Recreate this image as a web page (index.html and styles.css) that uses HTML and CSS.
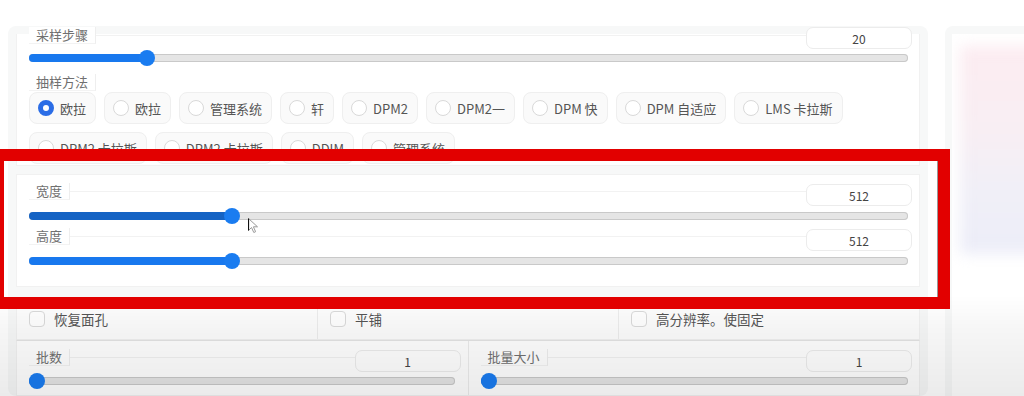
FILE: index.html
```html
<!DOCTYPE HTML>
<html>

<head>
    <title>生成设置</title>
    <meta name="viewport" content="width=device-width, initial-scale=1">
    <link rel="icon" href="data:,">
    <link rel="stylesheet" href="styles.css">
</head>

<body>
    <div class="page">
        <div class="settings">
            <div class="block block-sampler">
                <div class="group group-first">
                    <div class="group-head"><span class="label">采样步骤</span><span class="num">20</span></div>
                    <div class="slider"><div class="track"><div class="fill" style="width: calc(8px + (100% - 16px) * 0.1275)"></div></div></div>
                </div>
                <div class="radio-group">
                    <span class="label">抽样方法</span>
                    <div class="chips">
                        <label class="chip"><span class="radio checked"></span>欧拉</label>
                        <label class="chip"><span class="radio"></span>欧拉</label>
                        <label class="chip"><span class="radio"></span>管理系统</label>
                        <label class="chip"><span class="radio"></span>轩</label>
                        <label class="chip"><span class="radio"></span>DPM2</label>
                        <label class="chip"><span class="radio"></span>DPM2一</label>
                        <label class="chip"><span class="radio"></span>DPM 快</label>
                        <label class="chip"><span class="radio"></span>DPM 自适应</label>
                        <label class="chip"><span class="radio"></span>LMS 卡拉斯</label>
                        <label class="chip"><span class="radio"></span>DPM2 卡拉斯</label>
                        <label class="chip"><span class="radio"></span>DPM2 卡拉斯</label>
                        <label class="chip"><span class="radio"></span>DDIM</label>
                        <label class="chip"><span class="radio"></span>管理系统</label>
                    </div>
                </div>
            </div>

            <div class="block block-size">
                <div class="group">
                    <div class="group-head"><span class="label">宽度</span><span class="num">512</span></div>
                    <div class="slider"><div class="track"><div class="fill fill-active" style="width: calc(8px + (100% - 16px) * 0.2258)"></div></div></div>
                </div>
                <div class="group">
                    <div class="group-head"><span class="label">高度</span><span class="num">512</span></div>
                    <div class="slider"><div class="track"><div class="fill" style="width: calc(8px + (100% - 16px) * 0.2258)"></div></div></div>
                </div>
            </div>

            <div class="block block-checks">
                <label class="check-col"><span class="checkbox"></span>恢复面孔</label>
                <label class="check-col"><span class="checkbox"></span>平铺</label>
                <label class="check-col"><span class="checkbox"></span>高分辨率。使固定</label>
            </div>

            <div class="block block-batch">
                <div class="batch-col">
                    <div class="group">
                        <div class="group-head"><span class="label">批数</span><span class="num">1</span></div>
                        <div class="slider slider-short"><div class="track"><div class="fill" style="width: 8px"></div></div></div>
                    </div>
                </div>
                <div class="batch-col">
                    <div class="group">
                        <div class="group-head"><span class="label">批量大小</span><span class="num">1</span></div>
                        <div class="slider"><div class="track"><div class="fill" style="width: 8px"></div></div></div>
                    </div>
                </div>
            </div>
        </div>

        <div class="preview">
            <div class="preview-inner">
                <div class="preview-blur"></div>
            </div>
        </div>
    </div>

    <!-- mouse pointer from the recording -->
    <svg class="cursor" width="12" height="16" viewBox="0 0 12 16">
        <path d="M0.5 0.5 L0.5 12.5 L3.5 9.5 L5.8 14.5 L7.6 13.7 L5.4 8.8 L9.5 8.8 Z" fill="#fff" stroke="#9a9a9a" stroke-width="1"/>
        <path d="M0.5 0.5 L0.5 12.5" stroke="#111" stroke-width="1.2"/>
    </svg>

    <div class="shade"></div>
    <div class="highlight"></div>
</body>

</html>
```

FILE: styles.css
```css
html {
    font-family: "Noto Sans CJK SC", "Noto Sans", sans-serif;
}

body {
    margin: 0;
    height: 396px;
    overflow: hidden;
    background-color: #fff;
    color: #555;
}

.page {
    display: flex;
    gap: 17px;
    padding: 26px 0 0 8px;
    height: 396px;
    box-sizing: border-box;
    overflow: hidden;
}

.settings {
    flex: 0 0 920px;
    box-sizing: border-box;
    padding: 8px;
    background-color: #f7f8f8;
    border-radius: 8px;
    display: flex;
    flex-direction: column;
}

.block {
    background-color: #fff;
    border: 1px solid #f1f1f1;
    box-sizing: border-box;
}

.block-sampler {
    padding: 0 7px 1px 12px;
    border-top: none;
}

.block-size {
    margin-top: 8px;
    padding: 8px 7px 13px 12px;
}

.block-size .group {
    margin-bottom: 4px;
}

.block-size .slider {
    margin-top: 2px;
}

.block-checks {
    margin-top: 12px;
    display: flex;
    background-color: #fdfdfd;
}

.block-batch {
    display: flex;
    border-top: 1px solid #e4e4e4;
}

.block-batch .slider {
    margin-top: 1px;
}

/* slider groups */
.group {
    margin-bottom: 6px;
}

.group-first {
    margin-top: -7px;
    margin-bottom: 0;
}

.group-head {
    display: flex;
    justify-content: space-between;
    align-items: flex-start;
    height: 23px;
    background: linear-gradient(#f2f2f2, #f2f2f2) no-repeat 0 8px / 100% 1px;
}

.label {
    display: block;
    width: fit-content;
    height: 17px;
    line-height: 16px;
    padding: 0 7px;
    font-size: 13px;
    color: #707070;
    background-color: #fff;
    border-right: 1px solid #eeeeee;
    border-bottom: 1px solid #f3f3f3;
    box-sizing: border-box;
}

.num {
    width: 106px;
    height: 22px;
    margin-top: 1px;
    line-height: 21px;
    text-align: center;
    font-size: 12px;
    color: #444;
    background-color: #fff;
    border: 1px solid #ececec;
    border-radius: 7px;
    box-sizing: border-box;
}

.group-first .num {
    margin-top: 0;
}

.slider {
    height: 16px;
    display: flex;
    align-items: center;
    margin-right: 4px;
}

.slider-short {
    margin-right: 6px;
}

.track {
    flex: 1;
    height: 8px;
    border-radius: 4px;
    background-color: #e5e5e5;
    box-shadow: inset 0 0 0 1px #c9c9c9;
}

.fill {
    position: relative;
    height: 8px;
    border-radius: 4px;
    background-color: #1878ee;
}

.fill-active {
    background-color: #1563c4;
}

.fill::after {
    content: "";
    position: absolute;
    right: -8px;
    top: -4px;
    width: 16px;
    height: 16px;
    border-radius: 50%;
    background-color: #1a7cf0;
}

/* sampling method */
.radio-group {
    margin-top: 8px;
}

.chips {
    display: flex;
    flex-wrap: wrap;
    gap: 8px;
    margin-top: 1px;
}

.chip {
    display: flex;
    align-items: center;
    gap: 6px;
    height: 32px;
    padding: 0 9px 0 8px;
    font-size: 13px;
    color: #555;
    background-color: #fafafa;
    border: 1px solid #efefef;
    border-radius: 8px;
    box-sizing: border-box;
}

.radio {
    width: 16px;
    height: 16px;
    border-radius: 50%;
    border: 1px solid #d9d9d9;
    background-color: #fff;
    box-sizing: border-box;
}

.radio.checked {
    border: 5px solid #2b6de6;
}

/* checkboxes */
.check-col {
    flex: 1;
    display: flex;
    align-items: center;
    gap: 9px;
    padding: 9px 12px 10px;
    font-size: 13.5px;
    color: #555;
}

.check-col + .check-col {
    border-left: 1px solid #ededed;
}

.checkbox {
    width: 16px;
    height: 16px;
    border: 1px solid #dadada;
    border-radius: 4px;
    background-color: #fff;
    box-sizing: border-box;
}

/* batch */
.batch-col {
    flex: 1;
    padding: 8px 7px 0 12px;
}

.batch-col + .batch-col {
    border-left: 1px solid #ececec;
    padding-right: 7px;
}

/* right preview panel */
.preview {
    flex: 0 0 200px;
    height: 380px;
    box-sizing: border-box;
    padding: 8px 7px;
    background-color: #f7f8f8;
    border-radius: 8px;
}

.preview-inner {
    height: 100%;
    background-color: #fff;
    overflow: hidden;
    padding: 12px 0 0 8px;
    box-sizing: border-box;
}

.preview-blur {
    width: 180px;
    height: 208px;
    background: linear-gradient(180deg, #fcecf1 0%, #f8eef3 40%, #f0eff7 70%, #ecedf8 100%);
    filter: blur(7px);
}

/* overlays from the recording */
.cursor {
    position: absolute;
    left: 248px;
    top: 218px;
}

.shade {
    position: fixed;
    left: 0;
    top: 0;
    right: 0;
    bottom: 0;
    pointer-events: none;
    background: linear-gradient(180deg, rgba(0, 0, 0, 0) 0, rgba(0, 0, 0, 0) 295px, rgba(0, 0, 0, 0.035) 330px, rgba(0, 0, 0, 0.08) 396px);
}

.highlight {
    position: absolute;
    left: -8px;
    top: 149px;
    width: 958px;
    height: 160px;
    box-sizing: border-box;
    border: 12px solid #e20000;
    box-shadow: inset -1px 0 0 #9a9a9a;
    pointer-events: none;
}
```
